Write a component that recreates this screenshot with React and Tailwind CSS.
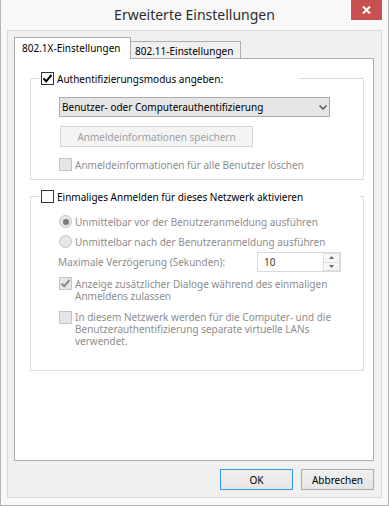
import React from 'react';

// little checkbox, Windows 8 look
const Box = ({ checked, disabled }) => (
  <span
    className={`w-[13px] h-[13px] border flex items-center justify-center shrink-0 ${
      disabled ? 'border-[#c4c4c4] bg-[#e6e6e6]' : 'border-[#333333] bg-white'
    }`}
  >
    {checked && (
      <svg width="11" height="11" viewBox="0 0 11 11">
        <path
          d="M1.5 5.5 L4.2 8.3 L9.5 2"
          fill="none"
          stroke={disabled ? '#8a8a8a' : '#000'}
          strokeWidth="2"
        />
      </svg>
    )}
  </span>
);

const Radio = ({ checked }) => (
  <span className="w-[13px] h-[13px] rounded-full border border-[#c4c4c4] bg-[#e6e6e6] flex items-center justify-center shrink-0">
    {checked && <span className="w-[6px] h-[6px] rounded-full bg-[#7a7a7a]" />}
  </span>
);

const App = () => {
  return (
    <div className="w-[389px] h-[506px] bg-[#f8f8f8] border-x border-b border-[#b5b5b5] flex flex-col relative font-['Noto_Sans',sans-serif] text-[10px] leading-[12px] text-black select-none">
      {/* title bar */}
      <div className="h-[30px] flex items-center justify-center text-[14px] text-[#2d2d2d]">
        Erweiterte Einstellungen
      </div>
      <div className="absolute top-0 right-[6px] w-[31px] h-[20px] bg-[#c75050] flex items-center justify-center">
        <svg width="9" height="8" viewBox="0 0 9 8">
          <path d="M1 0.5 L8 7.5 M8 0.5 L1 7.5" stroke="#fff" strokeWidth="2" />
        </svg>
      </div>

      {/* client area */}
      <div className="mx-[6px] mb-[7px] h-[468px] border border-[#d9d9d9] bg-[#f0f0f0] pt-[6px] pl-[6px] pr-[7px] pb-[7px] flex flex-col">
        {/* tabs */}
        <div className="h-[21px] flex items-end relative z-10 whitespace-nowrap">
          <div className="relative z-10 h-[22px] w-[117px] mb-[-1px] border border-b-0 border-[#acacac] bg-white flex items-center pl-[7px] pb-[1px]">
            802.1X-Einstellungen
          </div>
          <div className="h-[17px] w-[111px] ml-[-1px] border border-b-0 border-[#acacac] bg-[#f0f0f0] flex items-center pl-[4px] pt-[1px]">
            802.11-Einstellungen
          </div>
        </div>

        <div className="h-[403px] border border-[#acacac] bg-white pt-[13px] pl-[15px]">
          {/* group 1 */}
          <fieldset className="w-[334px] border border-[#dcdcdc] pl-[8px] pb-[8px]">
            <legend className="w-[260px] pl-[2px]">
              <div className="flex items-center gap-[3px] h-[13px]">
                <Box checked />
                <span>Authentifizierungsmodus angeben:</span>
              </div>
            </legend>
            <div className="ml-[20px] mt-[12px] w-[271px] h-[20px] border border-[#acacac] bg-[#e5e5e5] flex items-center justify-between pl-[2px] pr-[2px]">
              <span>Benutzer- oder Computerauthentifizierung</span>
              <svg width="8" height="5" viewBox="0 0 8 5">
                <path d="M0.5 0.5 L4 4 L7.5 0.5" fill="none" stroke="#555" strokeWidth="1.5" />
              </svg>
            </div>
            <div className="ml-[21px] mt-[9px] w-[193px] h-[21px] border border-[#d5d5d5] bg-[#f4f4f4] text-[#a0a0a0] flex items-center justify-center">
              Anmeldeinformationen speichern
            </div>
            <div className="ml-[20px] mt-[11px] h-[13px] flex items-center gap-[3px] text-[#8d8d8d]">
              <Box disabled />
              <span>Anmeldeinformationen für alle Benutzer löschen</span>
            </div>
          </fieldset>

          {/* group 2 */}
          <fieldset className="mt-[10px] w-[334px] border border-[#dcdcdc] pl-[8px] pb-[23px]">
            <legend className="w-[321px] pl-[2px]">
              <div className="flex items-center gap-[3px] h-[13px]">
                <Box />
                <span>Einmaliges Anmelden für dieses Netzwerk aktivieren</span>
              </div>
            </legend>
            <div className="ml-[20px] mt-[12px] h-[13px] flex items-center gap-[3px] text-[#8d8d8d]">
              <Radio checked />
              <span>Unmittelbar vor der Benutzeranmeldung ausführen</span>
            </div>
            <div className="ml-[20px] mt-[7px] h-[13px] flex items-center gap-[3px] text-[#8d8d8d]">
              <Radio />
              <span>Unmittelbar nach der Benutzeranmeldung ausführen</span>
            </div>
            <div className="ml-[19px] mt-[4px] h-[20px] flex items-center">
              <span className="w-[199px] text-[#8d8d8d]">Maximale Verzögerung (Sekunden):</span>
              <div className="w-[84px] h-[20px] border border-[#d9d9d9] bg-white flex">
                <span className="flex-1 pl-[6px] flex items-center text-[#3a3a3a]">10</span>
                <div className="w-[17px] flex flex-col border border-[#dedede] bg-[#f7f7f7]">
                  <div className="flex-1 flex items-center justify-center border-b border-[#dedede]">
                    <svg width="5" height="3" viewBox="0 0 5 3">
                      <path d="M0 3 L2.5 0 L5 3 Z" fill="#6d6d6d" />
                    </svg>
                  </div>
                  <div className="flex-1 flex items-center justify-center">
                    <svg width="5" height="3" viewBox="0 0 5 3">
                      <path d="M0 0 L2.5 3 L5 0 Z" fill="#6d6d6d" />
                    </svg>
                  </div>
                </div>
              </div>
            </div>
            <div className="ml-[20px] mt-[5px] flex items-start gap-[3px] text-[#8d8d8d]">
              <Box checked disabled />
              <span className="whitespace-nowrap pt-[1px]">
                Anzeige zusätzlicher Dialoge während des einmaligen
                <br />
                Anmeldens zulassen
              </span>
            </div>
            <div className="ml-[20px] mt-[9px] flex items-start gap-[3px] text-[#8d8d8d]">
              <Box disabled />
              <span className="whitespace-nowrap">
                In diesem Netzwerk werden für die Computer- und die
                <br />
                Benutzerauthentifizierung separate virtuelle LANs
                <br />
                verwendet.
              </span>
            </div>
          </fieldset>
        </div>

        {/* buttons */}
        <div className="mt-[8px] flex justify-end gap-[8px]">
          <button className="w-[73px] h-[21px] border border-[#3399ff] bg-linear-to-b from-[#f0f0f0] to-[#e5e5e5] flex items-center justify-center">
            OK
          </button>
          <button className="w-[73px] h-[21px] border border-[#acacac] bg-linear-to-b from-[#f0f0f0] to-[#e5e5e5] flex items-center justify-center">
            Abbrechen
          </button>
        </div>
      </div>
    </div>
  );
};

export default App;
